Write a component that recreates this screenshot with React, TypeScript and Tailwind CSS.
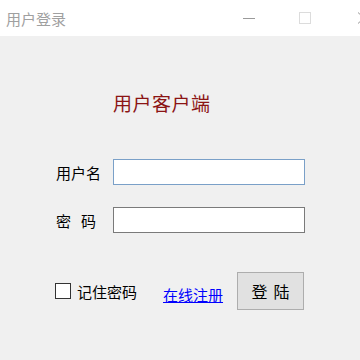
export default function App() {
  const font = { fontFamily: '"Noto Sans CJK SC", "Noto Sans", sans-serif' };
  return (
    <div className="w-[360px] h-[360px] bg-[#f0f0f0] flex flex-col overflow-hidden" style={font}>
      {/* title bar */}
      <div className="h-[36px] bg-white flex items-center shrink-0">
        <span className="ml-[6px] text-[15px] text-[#a0a0a0] leading-none">用户登录</span>
        <div className="ml-auto flex items-center mr-[-5px]">
          <div className="w-[12px] h-px bg-[#9a9a9a] mr-[44px]" />
          <div className="w-[12px] h-[12px] border border-[#dcdcdc] mr-[46px]" />
          <svg width="8" height="12" viewBox="0 0 8 12">
            <path d="M1 0.5 L7 6 L1 11.5" stroke="#9a9a9a" strokeWidth="1" fill="none" />
          </svg>
        </div>
      </div>

      {/* heading */}
      <div className="mt-[55px] pl-[113px] h-[22px] flex items-center">
        <span className="text-[19px] text-[#8b1414] leading-none tracking-[0.5px]">用户客户端</span>
      </div>

      {/* user name row */}
      <div className="mt-[46px] flex items-center h-[26px]">
        <span className="ml-[56px] w-[57px] text-[15px] text-black leading-none">用户名</span>
        <div className="w-[192px] h-[26px] bg-white border border-[#7aa0c8]" />
      </div>

      {/* password row */}
      <div className="mt-[22px] flex items-center h-[26px]">
        <span className="ml-[56px] w-[57px] text-[15px] text-black leading-none">
          密<span className="ml-[10px]">码</span>
        </span>
        <div className="w-[192px] h-[26px] bg-white border border-[#7a7a7a]" />
      </div>

      {/* bottom row */}
      <div className="mt-[39px] flex items-center h-[38px]">
        <div className="ml-[55px] w-[16px] h-[16px] bg-white border border-[#333333]" />
        <span className="ml-[6px] text-[15px] text-black leading-none">记住密码</span>
        <a className="ml-[26px] mt-[6px] text-[15px] text-[#0000ff] underline leading-none">在线注册</a>
        <button className="ml-[14px] w-[67px] h-[38px] bg-[#e1e1e1] border border-[#adadad] text-[16px] text-black leading-none">
          登<span className="ml-[6px]">陆</span>
        </button>
      </div>
    </div>
  );
}
